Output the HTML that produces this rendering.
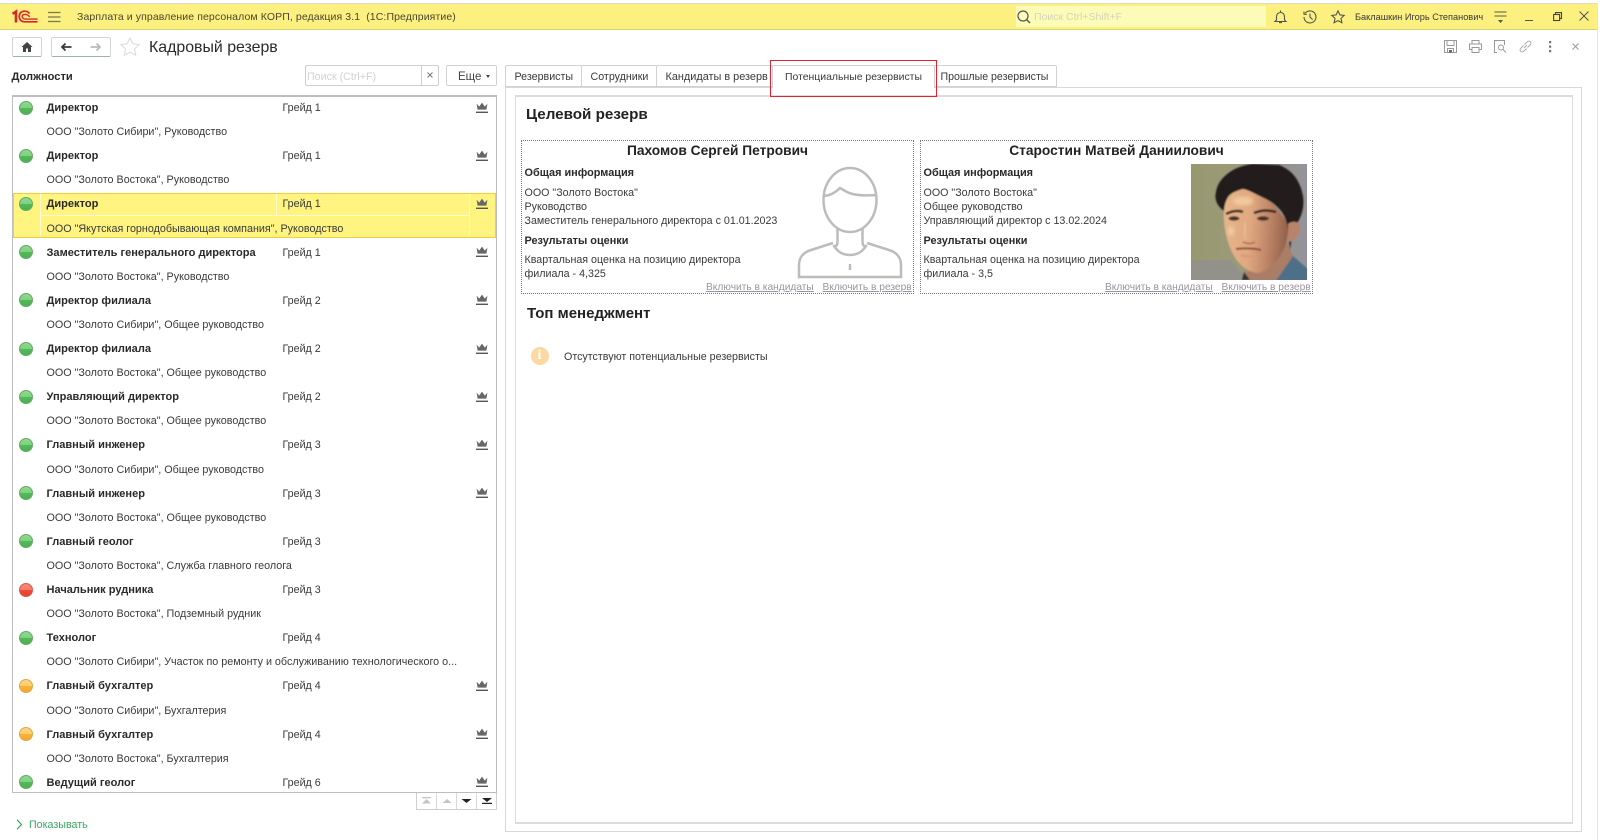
<!DOCTYPE html>
<html lang="ru"><head><meta charset="utf-8"><title>Кадровый резерв</title>
<style>
html,body{margin:0;padding:0;background:#fff}
body{position:relative;width:1600px;height:840px;overflow:hidden;font-family:"Liberation Sans",sans-serif;font-size:10.7px;color:#3a3a3a;filter:blur(.25px)}
.a{position:absolute}
.t{position:absolute;white-space:nowrap;line-height:14px}
.b{font-weight:bold;color:#2a2a2a;font-size:10.9px}
.r{position:absolute;left:0;width:484px;height:48px}
.r .n{position:absolute;white-space:nowrap;line-height:14px;left:33.5px;top:5.1px;font-weight:bold;color:#2a2a2a;font-size:11.05px}
.r .g1{position:absolute;white-space:nowrap;line-height:14px;left:269.5px;top:5.1px}
.r .s{position:absolute;white-space:nowrap;line-height:14px;left:33.5px;top:29.2px;font-size:10.75px}
.c{position:absolute;left:6px;top:4.5px;width:14px;height:14px;border-radius:50%;box-sizing:border-box}
.g{background:linear-gradient(#8fd98f 0,#7ed07e 48%,#55b85a 52%,#4bb050 100%);border:1px solid #62ad66}
.o{background:linear-gradient(#fcd680 0,#fbcf6c 48%,#f8b03c 52%,#f6a62e 100%);border:1px solid #e0a848}
.d{background:linear-gradient(#f68a78 0,#f47a68 48%,#ee4a38 52%,#e83e2e 100%);border:1px solid #d65a4c}
.cr{position:absolute;left:461.500px;top:5.500px;width:14px;height:12px}
.tab{position:absolute;top:65px;height:22px;box-sizing:border-box;border:1px solid #d2d2d2;line-height:19px;background:#fff;color:#3a3a3a;white-space:nowrap;border-radius:2px 2px 0 0}
.tab span{position:absolute;top:2px}
.card{position:absolute;top:140px;width:393px;height:154px;box-sizing:border-box;border:1px dotted #777}
.lnk{position:absolute;top:140px;font-size:10.2px;color:#9c93a0;text-decoration:underline;white-space:nowrap;line-height:14px}
.nm{position:absolute;left:0;right:0;top:1.500px;text-align:center;font-size:13.750px;font-weight:bold;line-height:16px;color:#222;white-space:nowrap}
svg{position:absolute;display:block;overflow:visible}
</style></head><body>
<svg width="0" height="0" style="position:absolute"><defs>
<symbol id="crown" viewBox="0 0 14 12"><path d="M1.600 1.600L4.200 4.600 7 .6l2.800 4 2.600-3L11.400 7.600H2.600z" fill="#666"/><rect x="1" y="9.600" width="12" height="1.400" fill="#555"/></symbol>
</defs></svg>

<!-- top strip -->
<div class="a" style="left:0;top:3px;width:1597px;height:27px;box-sizing:border-box;background:#fbf080;border-top:1px solid #dcdcc0;border-bottom:1px solid #dcd36c"></div>
<svg style="left:12px;top:10px" width="26" height="14" viewBox="0 0 26 14" fill="none">
<path d="M.6 3.800L4 1.600V12.500" stroke="#d8262c" stroke-width="2.600"/>
<path d="M17.500 3.600C16.400 1.800 14.400 1.200 12.400 1.200 9.200 1.200 7.200 3.500 7.200 6.400s2 5.400 5.200 5.400H25.500" stroke="#d8262c" stroke-width="1.700"/>
<path d="M17.800 6.800C16 4.800 14.600 4.400 13.200 4.400 11.300 4.400 10.200 5.200 10.200 6.400s1 2.700 3 2.700H25.500" stroke="#d8262c" stroke-width="1.400"/>
</svg>
<svg style="left:48px;top:11px" width="13" height="13" viewBox="0 0 13 13"><path d="M0 1.500h12.500M0 6h12.500M0 10.500h12.500" stroke="#7a7850" stroke-width="1.300"/></svg>
<div class="t" style="left:77px;top:10px;font-size:10.500px;color:#4a4830;letter-spacing:.1px">Зарплата и управление персоналом КОРП, редакция 3.1&nbsp; (1С:Предприятие)</div>
<div class="a" style="left:1016px;top:6px;width:250px;height:21px;background:#fdfbb8"></div>
<svg style="left:1017px;top:10px" width="14" height="14" viewBox="0 0 14 14" fill="none"><circle cx="6" cy="6" r="5" stroke="#555" stroke-width="1.200"/><path d="M9.600 9.600L13 13" stroke="#555" stroke-width="1.400"/></svg>
<div class="t" style="left:1034px;top:10px;color:#d4d4b8;font-size:10.500px">Поиск Ctrl+Shift+F</div>
<svg style="left:1274px;top:10px" width="13" height="14" viewBox="0 0 13 14" fill="none" stroke="#555" stroke-width="1.100"><path d="M6.500 .5v1.500M2.500 10V6.500a4 4 0 0 1 8 0V10l1.500 1.500H1zM5 12.600h3"/></svg>
<svg style="left:1303px;top:10px" width="14" height="14" viewBox="0 0 14 14" fill="none" stroke="#555" stroke-width="1.100"><path d="M2.300 3.200A6 6 0 1 1 1 7"/><path d="M1 1.500v2.800h2.800"/><path d="M7 3.600V7l2.600 2.600"/></svg>
<svg style="left:1330.500px;top:10px" width="14" height="14" viewBox="0 0 14 14" fill="none" stroke="#555" stroke-width="1.100"><path d="M7 .9l1.900 4 4.300.5-3.200 3 .9 4.300L7 10.600l-3.900 2.100.9-4.300-3.200-3 4.300-.5z"/></svg>
<div class="t" style="left:1355px;top:10px;font-size:9.200px;color:#3a3a3a">Баклашкин Игорь Степанович</div>
<svg style="left:1494px;top:11px" width="13" height="13" viewBox="0 0 13 13"><path d="M.5 1h12M.5 5h12" stroke="#7a7850" stroke-width="1.200"/><path d="M4 9h5l-2.500 3z" fill="#555"/></svg>
<div class="a" style="left:1525px;top:20px;width:8px;height:1.400px;background:#555"></div>
<svg style="left:1553px;top:12px" width="9" height="9" viewBox="0 0 9 9" fill="none" stroke="#444" stroke-width="1.100"><rect x=".6" y="2.500" width="6" height="6"/><path d="M2.500 2.500V.6h6v6H6.600"/></svg>
<svg style="left:1579px;top:11px" width="10" height="10" viewBox="0 0 10 10"><path d="M.5.5l9 9M9.500.5l-9 9" stroke="#555" stroke-width="1"/></svg>

<!-- navigation -->
<div class="a" style="left:12px;top:37px;width:30px;height:20px;box-sizing:border-box;border:1px solid #d4d4d4;border-bottom:1px solid #9fb0b0;border-radius:2px"></div>
<svg style="left:21px;top:41px" width="12" height="12" viewBox="0 0 12 12"><path d="M6 1L.5 6H2v5h3V7.500h2V11h3V6h1.500z" fill="#444"/></svg>
<div class="a" style="left:51px;top:37px;width:60px;height:20px;box-sizing:border-box;border:1px solid #d4d4d4;border-bottom:1px solid #9fb0b0;border-radius:2px"></div>
<svg style="left:60px;top:42px" width="12" height="10" viewBox="0 0 12 10"><path d="M11.500 5H3M5.500 1.500L2 5l3.500 3.500" fill="none" stroke="#3a3a3a" stroke-width="1.800"/></svg>
<svg style="left:90px;top:42px" width="12" height="10" viewBox="0 0 12 10"><path d="M.5 5H9M6.500 1.500L10 5 6.500 8.500" fill="none" stroke="#bbb" stroke-width="1.800"/></svg>
<svg style="left:120px;top:37px" width="20" height="19" viewBox="0 0 20 19" fill="none" stroke="#dcdcdc" stroke-width="1.100"><path d="M10 1l2.800 5.800 6.300.8-4.600 4.300 1.200 6.300L10 15.200l-5.700 3 1.200-6.300L.9 7.600l6.300-.8z"/></svg>
<div class="t" style="left:149px;top:38px;line-height:20px;font-size:15.900px;color:#2a2a2a">Кадровый резерв</div>
<div class="t" style="left:11.500px;top:70px;font-weight:bold;color:#2a2a2a;font-size:11.100px">Должности</div>
<div class="a" style="left:305px;top:65px;width:134px;height:21px;box-sizing:border-box;border:1px solid #cfcfcf;border-radius:2px"></div>
<div class="a" style="left:421px;top:65px;width:1px;height:21px;background:#cfcfcf"></div>
<div class="t" style="left:307px;top:70px;color:#d2d2d2">Поиск (Ctrl+F)</div>
<svg style="left:427px;top:72px" width="6" height="6" viewBox="0 0 6 6"><path d="M.5.5l5 5M5.500.5l-5 5" stroke="#777" stroke-width="1"/></svg>
<div class="a" style="left:446px;top:65px;width:51px;height:21px;box-sizing:border-box;border:1px solid #d2d2d2;border-radius:2px"></div>
<div class="t" style="left:458px;top:70px;color:#444;font-size:11.500px">Еще</div>
<div class="a" style="left:486px;top:75px;border:2.500px solid transparent;border-top:3px solid #444;border-bottom:0"></div>

<!-- left list -->
<div class="a" style="left:12px;top:95px;width:485px;height:698px;box-sizing:border-box;border:1px solid #bdbdbd;border-top:2px solid #bdbdbd;overflow:hidden">
<div class="r" style="top:-1px"><div class="c g"></div><div class="n">Директор</div><div class="g1">Грейд 1</div><div class="s">ООО "Золото Сибири", Руководство</div><svg class="cr"><use href="#crown"/></svg></div>
<div class="r" style="top:47.200px"><div class="c g"></div><div class="n">Директор</div><div class="g1">Грейд 1</div><div class="s">ООО "Золото Востока", Руководство</div><svg class="cr"><use href="#crown"/></svg></div>
<div class="a" style="left:0;top:96px;width:483px;height:45px;box-sizing:border-box;background:#fff480;border:1.500px solid #f5cf3a"></div>
<div class="a" style="left:26.500px;top:97px;width:1px;height:43px;background:#fffbd0"></div>
<div class="a" style="left:263px;top:97px;width:1px;height:22px;background:#fffbd0"></div>
<div class="a" style="left:456px;top:97px;width:1px;height:43px;background:#fffbd0"></div>
<div class="a" style="left:27px;top:118px;width:429px;height:1px;background:#fffbd0"></div>
<div class="r" style="top:95.400px"><div class="c g"></div><div class="n">Директор</div><div class="g1">Грейд 1</div><div class="s">ООО "Якутская горнодобывающая компания", Руководство</div><svg class="cr"><use href="#crown"/></svg></div>
<div class="r" style="top:143.600px"><div class="c g"></div><div class="n">Заместитель генерального директора</div><div class="g1">Грейд 1</div><div class="s">ООО "Золото Востока", Руководство</div><svg class="cr"><use href="#crown"/></svg></div>
<div class="r" style="top:191.800px"><div class="c g"></div><div class="n">Директор филиала</div><div class="g1">Грейд 2</div><div class="s">ООО "Золото Сибири", Общее руководство</div><svg class="cr"><use href="#crown"/></svg></div>
<div class="r" style="top:240px"><div class="c g"></div><div class="n">Директор филиала</div><div class="g1">Грейд 2</div><div class="s">ООО "Золото Востока", Общее руководство</div><svg class="cr"><use href="#crown"/></svg></div>
<div class="r" style="top:288.200px"><div class="c g"></div><div class="n">Управляющий директор</div><div class="g1">Грейд 2</div><div class="s">ООО "Золото Востока", Общее руководство</div><svg class="cr"><use href="#crown"/></svg></div>
<div class="r" style="top:336.400px"><div class="c g"></div><div class="n">Главный инженер</div><div class="g1">Грейд 3</div><div class="s">ООО "Золото Сибири", Общее руководство</div><svg class="cr"><use href="#crown"/></svg></div>
<div class="r" style="top:384.600px"><div class="c g"></div><div class="n">Главный инженер</div><div class="g1">Грейд 3</div><div class="s">ООО "Золото Востока", Общее руководство</div><svg class="cr"><use href="#crown"/></svg></div>
<div class="r" style="top:432.800px"><div class="c g"></div><div class="n">Главный геолог</div><div class="g1">Грейд 3</div><div class="s">ООО "Золото Востока", Служба главного геолога</div></div>
<div class="r" style="top:481px"><div class="c d"></div><div class="n">Начальник рудника</div><div class="g1">Грейд 3</div><div class="s">ООО "Золото Востока", Подземный рудник</div></div>
<div class="r" style="top:529.200px"><div class="c g"></div><div class="n">Технолог</div><div class="g1">Грейд 4</div><div class="s">ООО "Золото Сибири", Участок по ремонту и обслуживанию технологического о...</div></div>
<div class="r" style="top:577.400px"><div class="c o"></div><div class="n">Главный бухгалтер</div><div class="g1">Грейд 4</div><div class="s">ООО "Золото Сибири", Бухгалтерия</div><svg class="cr"><use href="#crown"/></svg></div>
<div class="r" style="top:625.600px"><div class="c o"></div><div class="n">Главный бухгалтер</div><div class="g1">Грейд 4</div><div class="s">ООО "Золото Востока", Бухгалтерия</div><svg class="cr"><use href="#crown"/></svg></div>
<div class="r" style="top:673.800px"><div class="c g"></div><div class="n">Ведущий геолог</div><div class="g1">Грейд 6</div><svg class="cr"><use href="#crown"/></svg></div>
</div>
<!-- scroll buttons -->
<div class="a" style="left:416px;top:793px;width:81px;height:17px;box-sizing:border-box;border:1px solid #cfcfcf;border-top:0"></div>
<div class="a" style="left:436px;top:793px;width:1px;height:16px;background:#d8d8d8"></div>
<div class="a" style="left:456px;top:793px;width:1px;height:16px;background:#d8d8d8"></div>
<div class="a" style="left:476px;top:793px;width:1px;height:16px;background:#d8d8d8"></div>
<svg style="left:421px;top:797px" width="72" height="8" viewBox="0 0 72 8">
<path d="M1 0h9v1.200H1zM5.500 2L10 6.500H1z" fill="#c4c4c4"/><path d="M26 2l4.500 4h-9z" fill="#c4c4c4"/>
<path d="M40.500 2h10l-5 4z" fill="#222"/><path d="M61 1h10l-5 4z M61 5.800h10V7H61z" fill="#222"/></svg>
<svg style="left:15.500px;top:819px" width="7" height="11" viewBox="0 0 7 11"><path d="M1 .8l4.500 4.700L1 10.200" fill="none" stroke="#2f9e54" stroke-width="1.100"/></svg>
<div class="t" style="left:29px;top:818px;color:#3aa564">Показывать</div>

<!-- tabs / right panel -->
<div class="a" style="left:505px;top:87px;width:1077px;height:745px;box-sizing:border-box;border:1px solid #d8d8d8"></div>
<div class="tab" style="left:505px;width:77px"><span style="left:8.500px">Резервисты</span></div>
<div class="tab" style="left:581px;width:76px"><span style="left:8.500px">Сотрудники</span></div>
<div class="tab" style="left:656px;width:117px"><span style="left:8.500px;font-size:10.900px">Кандидаты в резерв</span></div>
<div class="tab" style="left:772px;width:163px;height:23px;border-bottom:0"><span style="left:12px;font-size:10.450px">Потенциальные резервисты</span></div>
<div class="tab" style="left:934px;width:123px"><span style="left:5.500px;font-size:10.600px">Прошлые резервисты</span></div>
<div class="a" style="left:515px;top:95px;width:1058px;height:729px;box-sizing:border-box;border:2px solid #dcdcdc;border-left-width:1px;border-right-width:1px;background:#fff"></div>
<div class="a" style="left:770px;top:60px;width:167px;height:37px;box-sizing:border-box;border:1.500px solid #e8202a"></div>

<div class="t" style="left:526px;top:106px;line-height:18px;font-size:15.200px;font-weight:bold;color:#222">Целевой резерв</div>

<div class="card" style="left:521px"><div class="nm">Пахомов Сергей Петрович</div>
<div class="t b" style="left:2.500px;top:24.500px">Общая информация</div>
<div class="t" style="left:2.500px;top:45px">ООО "Золото Востока"</div>
<div class="t" style="left:2.500px;top:59px">Руководство</div>
<div class="t" style="left:2.500px;top:73px">Заместитель генерального директора с 01.01.2023</div>
<div class="t b" style="left:2.500px;top:92.500px">Результаты оценки</div>
<div class="t" style="left:2.500px;top:112px">Квартальная оценка на позицию директора</div>
<div class="t" style="left:2.500px;top:125.500px">филиала - 4,325</div>
<span class="lnk" style="left:184px">Включить в кандидаты</span><span class="lnk" style="left:300.500px">Включить в резерв</span>
</div>
<svg style="left:521px;top:141.500px" width="393" height="154" viewBox="521 140 393 154" fill="none" stroke="#bcbcbc" stroke-width="2.500">
<ellipse cx="850" cy="198" rx="26.500" ry="32"/>
<path d="M824 194c7-.5 12-4 16-8 6 3 9 9 37 7"/>
<path d="M837.500 226v12c0 6-1 6-4 7M862.500 226v12c0 6 1 6 4 7"/>
<path d="M833 241L811 248c-8 2.500-12 8-12 15v12h102v-12c0-7-4-12.500-12-15L867 241"/>
<path d="M833.500 243c4 7 9 10 16.500 10s12.500-3 16.500-10"/>
<path d="M850 262v6"/></svg>

<div class="card" style="left:920px"><div class="nm">Старостин Матвей Даниилович</div>
<div class="t b" style="left:2.500px;top:24.500px">Общая информация</div>
<div class="t" style="left:2.500px;top:45px">ООО "Золото Востока"</div>
<div class="t" style="left:2.500px;top:59px">Общее руководство</div>
<div class="t" style="left:2.500px;top:73px">Управляющий директор с 13.02.2024</div>
<div class="t b" style="left:2.500px;top:92.500px">Результаты оценки</div>
<div class="t" style="left:2.500px;top:112px">Квартальная оценка на позицию директора</div>
<div class="t" style="left:2.500px;top:125.500px">филиала - 3,5</div>
<span class="lnk" style="left:184px">Включить в кандидаты</span><span class="lnk" style="left:300.500px">Включить в резерв</span>
</div>
<svg style="left:1191px;top:164px;overflow:hidden" width="116" height="116" viewBox="0 0 116 116">
<defs><linearGradient id="bg" x1="0" x2="1" y1="0" y2="0"><stop offset="0" stop-color="#989870"/><stop offset=".35" stop-color="#9a9a78"/><stop offset=".7" stop-color="#97968a"/><stop offset="1" stop-color="#94939a"/></linearGradient>
<linearGradient id="fc" x1="0" x2="1" y1="0" y2=".1"><stop offset="0" stop-color="#e8b68c"/><stop offset=".45" stop-color="#e0a880"/><stop offset=".75" stop-color="#bd8466"/><stop offset="1" stop-color="#96644e"/></linearGradient>
<filter id="bl"><feGaussianBlur stdDeviation=".7"/></filter><filter id="bl2"><feGaussianBlur stdDeviation="1.600"/></filter></defs>
<rect width="116" height="116" fill="url(#bg)"/>
<path d="M0 96h40l16 20H0z" fill="#93928a"/>
<g filter="url(#bl)">
<path d="M82 118L98 94l4-2 16 14v12z" fill="#4e7088"/>
<path d="M52 108l6 10h26l18-26-6-14-30 28z" fill="#aa7e66"/>
<path d="M53 108l6 8h-8z" fill="#333"/>
<path d="M33 46C32 60 35 75 40 86 45 98 55 108 67 109 78 107 90 95 95 79 97 72 98 65 97 59L75 30 52 22 36 30z" fill="url(#fc)"/>
<path d="M33 47C26 42 23 35 25 28 27 14 42 2 62 0L88 1C101 6 109 16 112 32 114 45 109 56 104 62L102 64 99 86 96 60C94 50 88 42 75 35 66 31 58 26 52 25 44 27 38 30 36 35 34 39 33 43 33 47Z" fill="#241d1a"/>
<path d="M97 60C101 56 110 57 109 65 108 73 103 77 97 78z" fill="#b9826a"/>
<path d="M35 50c6-3 12-4 17-2M63 49c7-3 15-3 22-1" stroke="#3a2a22" stroke-width="2.600" fill="none"/>
<ellipse cx="43" cy="54.500" rx="5.500" ry="2.200" fill="#44362a"/><ellipse cx="72" cy="54.500" rx="6" ry="2.200" fill="#44362a"/>
<path d="M54 58c0 8-1 11 0 17" stroke="#f2cfa8" stroke-width="3.500" fill="none" filter="url(#bl2)"/>
<ellipse cx="52" cy="37" rx="10" ry="4.500" fill="#f0ca9e" filter="url(#bl2)"/>
<ellipse cx="40" cy="67" rx="3.500" ry="5" fill="#f0caa2" filter="url(#bl2)"/>
<path d="M52 78c4 2 8 2 12 0" stroke="#a87456" stroke-width="1.800" fill="none"/>
<path d="M45 85c8-1 17-1 25 1" stroke="#8f4c3c" stroke-width="2" fill="none"/>
<path d="M50 91c5 2 10 2 15 0" stroke="#d89a7c" stroke-width="2.500" fill="none"/>
</g></svg>

<div class="t" style="left:527px;top:304.500px;line-height:18px;font-size:15px;font-weight:bold;color:#222">Топ менеджмент</div>
<div class="a" style="left:531px;top:347px;width:18px;height:18px;border-radius:50%;background:#fbd9a0"></div>
<div class="t" style="left:537.500px;top:349px;color:#fff;font-weight:bold;font-size:14px;font-family:'Liberation Serif',serif">i</div>
<div class="t" style="left:564px;top:350px">Отсутствуют потенциальные резервисты</div>

<!-- right toolbar -->
<svg style="left:1444px;top:40px" width="13" height="13" viewBox="0 0 13 13" fill="none" stroke="#999"><path d="M.5.500h12v12H.5z"/><path d="M3 .5v5h7v-5M3.500 12.500V8.500h6v4"/><path d="M5 10h3v2.500H5z" fill="#666" stroke="none"/></svg>
<svg style="left:1469px;top:40px" width="13" height="13" viewBox="0 0 13 13" fill="none" stroke="#999"><path d="M3 4V.5h7V4M3 9.500H.5V4h12v5.500H10"/><path d="M3 7.500h7v5H3z"/></svg>
<svg style="left:1494px;top:40px" width="13" height="13" viewBox="0 0 13 13" fill="none" stroke="#999"><path d="M3 12.500H.5V.5h10V5"/><circle cx="7" cy="7.500" r="2.500"/><path d="M9 9.500l3 3"/></svg>
<svg style="left:1519px;top:40px" width="13" height="13" viewBox="0 0 13 13" fill="none" stroke="#a8a8a8"><path d="M5 8l3-3M4.500 5.500L1.700 8.300a2 2 0 0 0 3 3L7.500 8.500M5.500 4.500L8.300 1.700a2 2 0 0 1 3 3L8.500 7.500"/></svg>
<svg style="left:1549px;top:41px" width="3" height="12" viewBox="0 0 3 12"><path d="M0 0h2.200v2.200H0zM0 4.500h2.200v2.200H0zM0 9h2.200v2.200H0z" fill="#777"/></svg>
<svg style="left:1572px;top:43px" width="7" height="7" viewBox="0 0 7 7"><path d="M.5.500l6 6M6.500.500l-6 6" stroke="#999" stroke-width="1"/></svg>
<div class="a" style="left:1597px;top:3px;width:1px;height:837px;background:#e4e4e4"></div>
</body></html>
